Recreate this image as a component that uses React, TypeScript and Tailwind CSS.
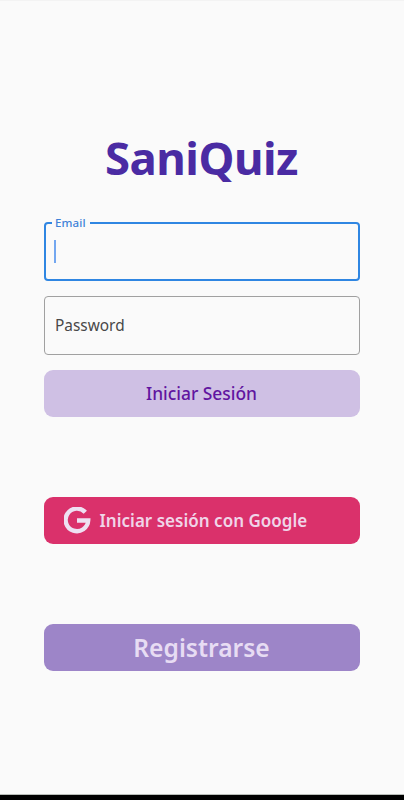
import React from "react";

function GoogleMark() {
  return (
    <svg className="h-[28px] w-[28px] shrink-0" viewBox="0 0 28 28" fill="none" stroke="#eee0f2" strokeWidth="4.4">
      <path d="M21.3 5.3 A11.3 11.3 0 1 0 24.2 13.5 H13" strokeLinejoin="miter" />
    </svg>
  );
}

export default function App() {
  return (
    <div className="flex h-[800px] w-[404px] flex-col overflow-hidden bg-[#fafafa] font-['Noto_Sans',sans-serif]">
      <div className="h-px shrink-0 bg-[#f3f3f3]" />
      <main className="flex flex-1 flex-col pr-[44.5px] pl-[43.5px]">
        <h1 className="mt-[124px] h-[64px] text-center text-[45.5px] leading-[64px] font-bold tracking-[-0.5px] whitespace-nowrap text-[#4a2ba3]">
          SaniQuiz
        </h1>

        <div className="relative mt-[33px] flex h-[59px] items-center rounded-[4px] border-2 border-[#2f86e2] pl-[8.5px]">
          <label className="absolute -top-[9px] left-[6.5px] w-[38px] bg-[#fafafa] pl-[3px] text-[11.5px] leading-[16px] font-medium tracking-[0.1px] text-[#3f82d8]">
            Email
          </label>
          <span className="h-[23px] w-[2px] bg-[#73a7f0]" />
        </div>

        <div className="mt-[15px] flex h-[59px] items-center rounded-[4px] border border-[#a0a0a0] pl-[10.5px] text-[15.4px] font-[450] text-[#484848]">
          Password
        </div>

        <button className="mt-[15px] h-[47px] rounded-[9px] bg-[#cfc0e4] text-[17.4px] font-medium text-[#6114a0]">
          Iniciar Sesión
        </button>

        <button className="mt-[80px] flex h-[47px] items-center rounded-[9px] bg-[#da316b] pl-[20px] text-[17px] font-semibold whitespace-nowrap text-[#f0d5e8]">
          <GoogleMark />
          <span className="ml-[8px] tracking-[0.02px]">Iniciar sesión con Google</span>
        </button>

        <button className="mt-[80px] h-[47px] rounded-[9px] bg-[#9d85c8] pt-[2px] text-[24.6px] font-semibold text-[#e7dcf3]">
          Registrarse
        </button>
      </main>
      <div className="h-[6px] shrink-0 border-t border-[#b9bdb9] bg-black" />
    </div>
  );
}
